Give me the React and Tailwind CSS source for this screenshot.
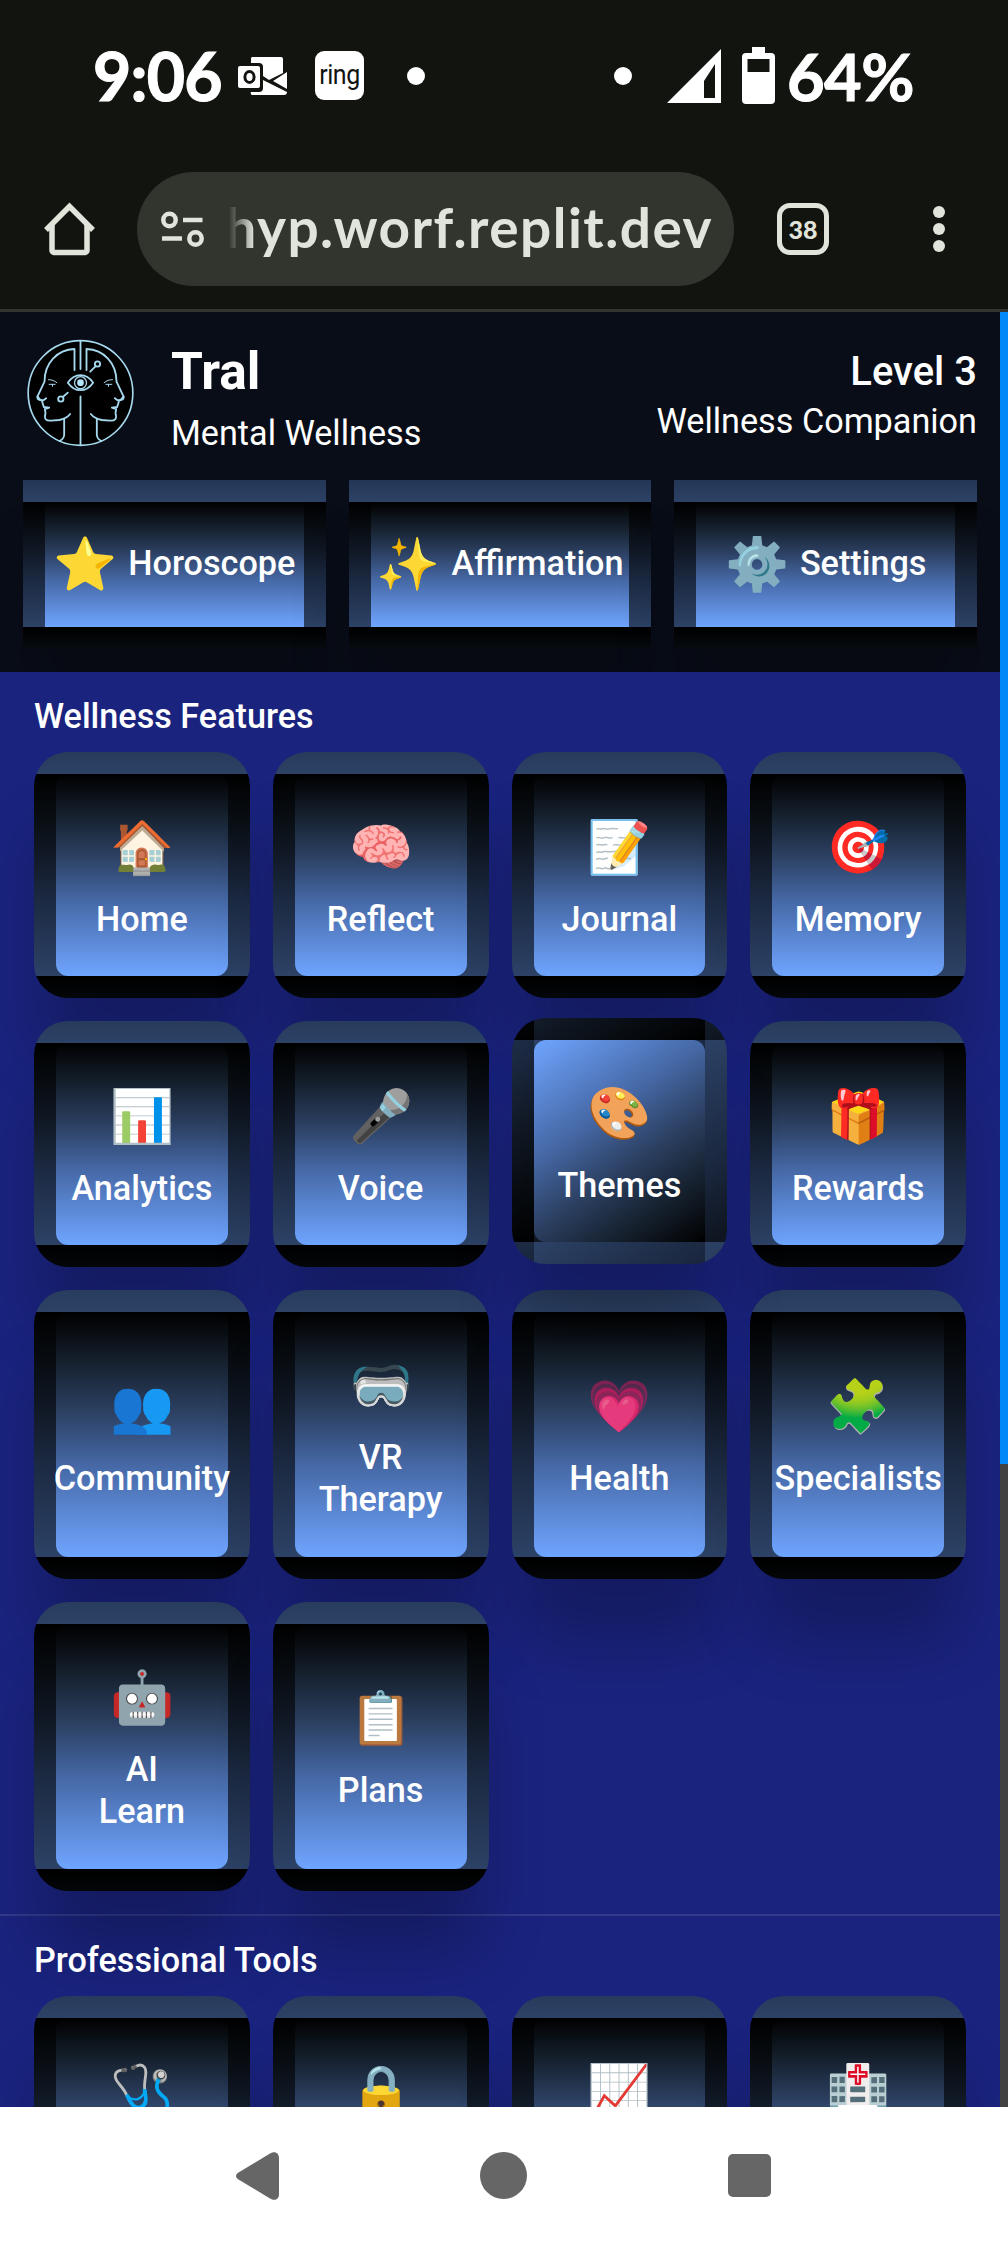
const quickActions = [
  { icon: '⭐', label: 'Horoscope' },
  { icon: '✨', label: 'Affirmation' },
  { icon: '⚙️', label: 'Settings' },
];

const features = [
  { icon: '🏠', label: 'Home' },
  { icon: '🧠', label: 'Reflect' },
  { icon: '📝', label: 'Journal' },
  { icon: '🎯', label: 'Memory' },
  { icon: '📊', label: 'Analytics' },
  { icon: '🎤', label: 'Voice' },
  { icon: '🎨', label: 'Themes', active: true },
  { icon: '🎁', label: 'Rewards' },
  { icon: '👥', label: 'Community' },
  { icon: '🥽', label: 'VR\nTherapy' },
  { icon: '💗', label: 'Health' },
  { icon: '🧩', label: 'Specialists' },
  { icon: '🤖', label: 'AI\nLearn' },
  { icon: '📋', label: 'Plans' },
];

const proTools = [
  { icon: '🩺', label: '' },
  { icon: '🔒', label: '' },
  { icon: '📈', label: '' },
  { icon: '🏥', label: '' },
];

function StatusBar() {
  return (
    <div className="flex h-[151px] items-center pl-[93px] pr-[93px] text-white">
      <span className="w-[145px] font-['Lato'] text-[66px] leading-[70px] font-bold tracking-[-0.8px] [-webkit-text-stroke:1.2px_white]">9:06</span>
      <svg className="h-[40px] w-[50px]" viewBox="0 0 50 40">
        <path d="M14 1h29a2 2 0 0 1 2 2v14l-14 7-6-4V11a4 4 0 0 0-4-4h-8V3a2 2 0 0 1 1-2z" fill="#fff" />
        <rect x="0" y="10" width="22" height="22" rx="2" fill="#fff" />
        <ellipse cx="11.500" cy="21" rx="4.600" ry="5.400" fill="none" stroke="#11140f" strokeWidth="3" />
        <path d="M49 16v17l-14-8z" fill="#fff" />
        <path d="M25 24l24 12a3 3 0 0 1-3 3H15a2 2 0 0 1-2-3h8a4 4 0 0 0 4-4z" fill="#fff" />
      </svg>
      <div className="ml-[27px] flex h-[49px] w-[49px] items-center justify-center rounded-[9px] bg-white">
        <span className="-translate-y-[1px] scale-y-110 font-['Roboto'] text-[25px] leading-[30px] tracking-[-0.5px] text-[#11140f]">ring</span>
      </div>
      <span className="ml-[43px] h-[18px] w-[18px] rounded-full bg-white" />
      <span className="ml-auto h-[18px] w-[18px] rounded-full bg-white" />
      <svg className="ml-[35px] h-[54px] w-[54px]" viewBox="0 0 54 54">
        <path d="M54 0v54H0z" fill="#fff" />
        <path d="M48 15v34H37V32z" fill="#11140f" />
      </svg>
      <svg className="ml-[21px] h-[57px] w-[33px]" viewBox="0 0 33 57">
        <path d="M10 0h13v6h6a4 4 0 0 1 4 4v43a4 4 0 0 1-4 4H4a4 4 0 0 1-4-4V10a4 4 0 0 1 4-4h6z" fill="#fff" />
        <rect x="5.500" y="12" width="22" height="13" fill="#11140f" />
      </svg>
      <span className="ml-[12px] w-[128px] font-['Lato'] text-[65px] leading-[70px] font-bold tracking-[-0.6px] [-webkit-text-stroke:1px_white]">64%</span>
    </div>
  );
}

function BrowserBar() {
  return (
    <div className="flex h-[161px] items-center border-b-[3px] border-[#33362f] pb-[2px] text-[#e1e4da]">
      <svg className="ml-[43px] h-[54px] w-[53px]" viewBox="0 0 53 54" fill="none" stroke="currentColor" strokeWidth="5.500">
        <path d="M3 28L26.500 4.500 50 28" strokeLinejoin="miter" />
        <path d="M9 23v25.500a2 2 0 0 0 2 2h31a2 2 0 0 0 2-2V23" />
      </svg>
      <div className="ml-[41px] flex h-[114px] w-[597px] items-center rounded-[57px] bg-[#32352e] pl-[23px]">
        <svg className="h-[40px] w-[46px]" viewBox="0 0 46 40" fill="none" stroke="currentColor" strokeWidth="4.500">
          <circle cx="9.500" cy="11" r="6.200" />
          <path d="M23 11h19.500M2 29.500h20" />
          <circle cx="35.500" cy="29.500" r="6.200" />
        </svg>
        <div className="relative ml-[20px] flex h-[76px] w-[487px] justify-end">
          <span className="font-['Lato'] text-[55px] leading-[72px] font-bold tracking-[1.45px] whitespace-nowrap">
            hyp.worf.replit.dev
          </span>
          <span className="absolute inset-y-0 left-0 w-[28px] bg-gradient-to-r from-[#32352e] from-10% to-transparent" />
        </div>
      </div>
      <div className="ml-[43px] flex h-[52px] w-[52px] items-center justify-center rounded-[13px] border-[5px] border-[#e1e4da]">
        <span className="font-['Lato'] text-[25px] leading-[30px] font-black">38</span>
      </div>
      <div className="ml-[104px] flex flex-col gap-[5px]">
        <span className="h-[12px] w-[12px] rounded-full bg-[#e1e4da]" />
        <span className="h-[12px] w-[12px] rounded-full bg-[#e1e4da]" />
        <span className="h-[12px] w-[12px] rounded-full bg-[#e1e4da]" />
      </div>
    </div>
  );
}

function FaceHalf() {
  return (
    <>
      <path d="M142 30V93M142 30C90 32 52 72 52 128L31 172C29 178 32 181 38 183L48 184" />
      <path d="M31 172C36 180 42 188 50 183L57 178M45 188L50 204 66 206 53 210 55 222C50 240 56 246 72 245L96 243C112 240 122 234 129 225" />
      <path d="M111 240V288C110 298 104 303 97 306" />
      <path d="M64 122C74 122 82 125 89 131M66 136H84M76 136V142" strokeWidth="3" />
    </>
  );
}

function Logo() {
  return (
    <svg className="h-[108px] w-[107px]" viewBox="0 0 320 324" fill="none" stroke="#a6d8ee" strokeWidth="5.500" strokeLinecap="round" strokeLinejoin="round">
      <circle cx="160" cy="162" r="157" fill="#000" strokeWidth="5" />
      <FaceHalf />
      <g transform="translate(320 0) scale(-1 1)">
        <FaceHalf />
      </g>
      <path d="M160 6V90M160 172V318" />
      <path d="M122 131C143 101 177 101 198 131 177 161 143 161 122 131z" />
      <circle cx="160" cy="131" r="18" strokeWidth="4" />
      <circle cx="160" cy="131" r="10" fill="#b5e6fb" stroke="none" />
      <circle cx="211" cy="75" r="8" />
      <path d="M205 82L189 98M122 161L107 174" />
      <circle cx="101" cy="180" r="8" />
    </svg>
  );
}

function QuickButton({ icon, label }) {
  return (
    <button className="flex h-[169px] flex-1 items-center justify-center border-[22px] border-black/60 bg-[linear-gradient(180deg,#000_0%,#15202d_20%,#2b3f60_40%,#4567a4_62%,#6fa5ff_100%)] shadow-[0_70px_64px_-8px_rgba(0,0,0,0.22)]">
      <span className="mr-[11px] text-[51.5px] leading-[60px]">{icon}</span>
      <span className="-translate-y-[2px] text-[34.2px] leading-[42px] font-medium">{label}</span>
    </button>
  );
}

function Tile({ icon, label, active }) {
  const base =
    'flex flex-col items-center justify-center rounded-[34px] border-[22px] border-black/60 shadow-[0_70px_64px_-8px_rgba(0,0,0,0.22)]';
  const face = active
    ? 'relative z-10 -translate-y-[3px] bg-[linear-gradient(145deg,#6fa5ff_0%,#4567a4_38%,#2b3f60_60%,#15202d_80%,#000_100%)]'
    : 'bg-[linear-gradient(180deg,#000_0%,#15202d_20%,#2b3f60_40%,#4567a4_62%,#6fa5ff_100%)]';
  return (
    <button className={base + ' ' + face}>
      <span className="mb-[12px] h-[75px] text-[51.5px] leading-[74px]">{icon}</span>
      <span className="min-h-[42px] text-center text-[34.2px] leading-[42px] font-medium whitespace-pre">{label}</span>
    </button>
  );
}

function Section({ title, items, rows }) {
  return (
    <section className="px-[34px] pt-[23px] pb-[23px]">
      <h2 className="mb-[15px] text-[34.2px] leading-[42px] font-medium">{title}</h2>
      <div className={'grid grid-cols-4 gap-[23px] ' + rows}>
        {items.map((item) => (
          <Tile key={item.icon} {...item} />
        ))}
      </div>
    </section>
  );
}

function AppHeader() {
  return (
    <header className="h-[360px] overflow-hidden bg-[#090d18] px-[23px]">
      <div className="flex h-[168px] items-start">
        <div className="mt-[27px] ml-[4px]">
          <Logo />
        </div>
        <div className="mt-[30px] ml-[37px]">
          <h1 className="text-[51.5px] leading-[60px] font-bold">Tral</h1>
          <p className="mt-[9px] text-[34.2px] leading-[44px]">Mental Wellness</p>
        </div>
        <div className="mt-[35px] ml-auto text-right">
          <p className="text-[40px] leading-[50px] font-medium">Level 3</p>
          <p className="mt-[2px] text-[34.2px] leading-[44px]">Wellness Companion</p>
        </div>
      </div>
      <div className="flex gap-[23px]">
        {quickActions.map((action) => (
          <QuickButton key={action.label} {...action} />
        ))}
      </div>
    </header>
  );
}

function NavBar() {
  return (
    <div className="flex h-[137px] items-center bg-white text-[#666]">
      <svg className="ml-[236px] h-[48px] w-[43px]" viewBox="0 0 43 48" fill="currentColor">
        <path d="M34 1.500C39-1.500 43 1 43 6V42C43 47 39 49.500 34 46.500L2.500 27.500C-.8 25.500-.8 22.500 2.500 20.500z" />
      </svg>
      <span className="ml-[201px] h-[47px] w-[47px] rounded-full bg-[#666]" />
      <span className="ml-[201px] h-[43px] w-[43px] rounded-[5px] bg-[#666]" />
    </div>
  );
}

export default function App() {
  return (
    <div className="h-[2244px] w-[1008px] overflow-hidden bg-[#11140f] font-['Roboto',sans-serif]">
      <StatusBar />
      <BrowserBar />
      <div className="flex h-[1795px] overflow-hidden bg-[#1a237e] text-white">
        <main className="w-[1000px]">
          <AppHeader />
          <Section title="Wellness Features" items={features} rows="grid-rows-[246px_246px_289px_289px]" />
          <div className="h-[2px] bg-white/10" />
          <Section title="Professional Tools" items={proTools} rows="grid-rows-[246px]" />
        </main>
        <div className="w-[8px] bg-[#424242]">
          <div className="h-[1152px] bg-[#0389f8]" />
        </div>
      </div>
      <NavBar />
    </div>
  );
}
